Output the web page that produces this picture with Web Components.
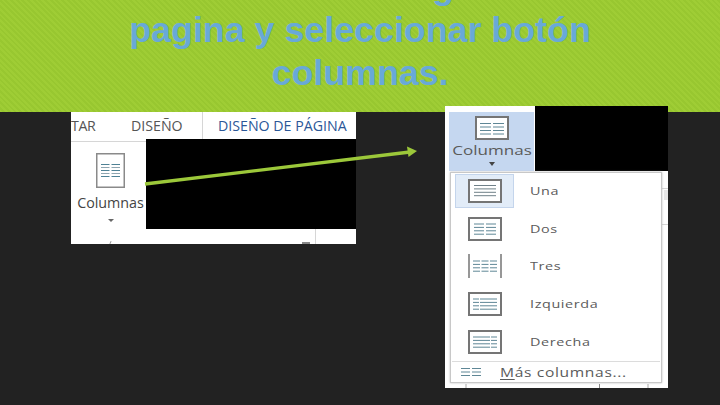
<!DOCTYPE html>
<html><head><meta charset="utf-8">
<style>html,body{margin:0;padding:0;background:#222;width:720px;height:405px;overflow:hidden}</style>
</head><body>
<slide-view></slide-view>
<script>
const icon=(b,lines)=>{let s='';for(const [x1,x2] of lines.cols){for(let i=0;i<4;i++){const y=lines.y+i*3.4;s+=`<line x1="${x1}" x2="${x2}" y1="${y}" y2="${y}" stroke="${lines.c||'#5f8796'}" stroke-width="1"/>`}}
return `<svg width="34" height="24" viewBox="0 0 34 24">${b}${s}</svg>`};
const box=`<rect x="1" y="1" width="32" height="22" fill="#fff" stroke="#757575" stroke-width="2"/>`;
const menuIcons={
 una:icon(box,{cols:[[6,28]],y:6.5,c:'#6f8088'}),
 dos:icon(box,{cols:[[6,16],[18,28]],y:7}),
 tres:icon('<path d="M1 0V24M33 0V24" stroke="#757575" stroke-width="1.5"/>',{cols:[[5,12],[13.5,20.5],[22,29]],y:7}),
 izq:icon(box,{cols:[[5,11],[12,29]],y:7}),
 der:icon(box,{cols:[[5,22],[23,29]],y:7})
};
customElements.define('slide-title',class extends HTMLElement{constructor(){super();this.attachShadow({mode:'open'}).innerHTML=`<style>
:host{display:block;height:112px;overflow:hidden;box-sizing:border-box;text-align:center;
 background:repeating-linear-gradient(45deg,#9fcd35 0 2px,#98c730 2px 4px);
 color:#68a9d8;font:bold 35.8px/43px "Liberation Sans",Arial,sans-serif}
.in{margin-top:-34px}
.g{padding-left:166px}
</style><div class="in"><span class="g">g</span><br>pagina y seleccionar botón<br>columnas.</div>`}});
customElements.define('ribbon-shot',class extends HTMLElement{constructor(){super();this.attachShadow({mode:'open'}).innerHTML=`<style>
:host{display:block;width:285px;height:132px;background:#fff;font-family:"Open Sans","Liberation Sans",sans-serif;color:#444;overflow:hidden;position:relative}
.tabs{display:flex;height:30px;border-bottom:1px solid #d6d6d6;box-sizing:border-box;font-size:14.2px;white-space:nowrap;line-height:27px}
.t1{width:132px;display:flex;height:100%;border-right:1px solid #d6d6d6;box-sizing:border-box;overflow:hidden;color:#555}
.t1 span:first-child{width:60px;letter-spacing:-.4px}
.t2{color:#2b5797;padding-left:15px}
.col{width:79px;display:flex;flex-direction:column;align-items:center;padding-top:11px}
.col svg{margin-left:-1px}
.lab{font-size:14.3px;margin-top:5px;color:#444;white-space:nowrap}
.car{width:0;height:0;border:3px solid transparent;border-top:3px solid #666;border-bottom:0;margin-top:7px}
.mask{position:absolute;left:75px;top:27px;width:210px;height:90px;background:#000}
.foot{position:absolute;left:244px;top:117px;bottom:0;border-left:1px solid #d6d6d6}
.sq{position:absolute;left:231px;top:130px;width:8px;height:2px;background:#888}
.tick{position:absolute;left:39px;top:129px;width:1px;height:3px;background:#999;transform:rotate(25deg)}
</style><div class="tabs"><div class="t1"><span>TAR</span><span>DISEÑO</span></div><div class="t2">DISEÑO DE PÁGINA</div></div>
<div class="col"><svg width="29" height="35" viewBox="0 0 29 35"><rect x=".75" y=".75" width="27.5" height="33.5" fill="#fff" stroke="#8a8a8a" stroke-width="1.5"/><path d="M5 11.5H13.5M15.5 11.5H24M5 17.5H13.5M15.5 17.5H24M5 23.5H13.5M15.5 23.5H24" stroke="#4f8295"/><path d="M5 14.5H13.5M15.5 14.5H24M5 20.5H13.5M15.5 20.5H24" stroke="#8fa5b0"/></svg><div class="lab">Columnas</div><div class="car"></div></div>
<div class="mask"></div><div class="foot"></div><div class="sq"></div><div class="tick"></div>`}});
customElements.define('menu-item',class extends HTMLElement{constructor(){super();const n=this.getAttribute('icon');this.attachShadow({mode:'open'}).innerHTML=`<style>
:host{display:flex;align-items:center;height:37.6px;box-sizing:border-box;font:11.5px "Open Sans","Liberation Sans",sans-serif;color:#5a5a5a;letter-spacing:.5px;padding-left:4px}
:host([sel]) .ic{background:#e2ecf8;box-shadow:inset 0 0 0 1px #c4d5ec}
.ic{width:59px;height:34px;display:flex;align-items:center;justify-content:center;flex:none;margin:-1px 16px 0 0}
.t{display:inline-block;transform:scaleX(1.25);transform-origin:left center;margin-top:-2px}
</style><div class="ic">${menuIcons[n]}</div><span class="t"><slot></slot></span>`}});
customElements.define('columns-menu',class extends HTMLElement{constructor(){super();this.attachShadow({mode:'open'}).innerHTML=`<style>
:host{display:block;width:223px;height:282px;background:#fff;position:relative;overflow:hidden;font:11.5px "Open Sans","Liberation Sans",sans-serif;color:#5a5a5a}
.top{display:flex;height:65px;padding:6px 0 0 4px;box-sizing:border-box}
.btn{width:85px;height:59px;background:#c5d7f0;display:flex;flex-direction:column;align-items:center;flex:none}
.btn svg{margin-top:4px}
.btn .lab{margin:3px 0 0 2px;line-height:15px;font-size:12px;transform:scaleX(1.42);white-space:nowrap}
.car{width:0;height:0;border:3px solid transparent;border-top:4px solid #444;border-bottom:0;margin-top:4px}
.mask{position:absolute;left:90px;top:0;right:0;height:65px;background:#000}
.pop{position:absolute;left:5px;top:66px;width:212px;height:211px;background:#fff;border:1px solid #c8c8c8;box-sizing:border-box;box-shadow:0 0 2px #bbb}
.more{display:flex;align-items:center;height:22px;border-top:1px solid #dcdcdc;letter-spacing:.5px;padding-left:9px;box-sizing:border-box;margin:0 1px}
.more svg{margin-right:19px;flex:none}
.more span{display:inline-block;font-size:12px;transform:scaleX(1.3);transform-origin:left center;white-space:nowrap}
u{text-underline-offset:2px}
.r{position:absolute;background:#d4d4d4}
</style><div class="top"><div class="btn"><svg width="34" height="24" viewBox="0 0 34 24">${box}<path d="M5 7.5H16M18 7.5H29M5 11H16M18 11H29M5 14.5H16M18 14.5H29M5 18H16M18 18H29" stroke="#5f8796"/></svg><div class="lab">Columnas</div><div class="car"></div></div></div><div class="mask"></div>
<div class="r" style="left:217px;top:82px;width:6px;height:1px"></div><div class="r" style="left:217px;top:118px;width:6px;height:1px"></div><div class="r" style="left:219px;top:84px;width:4px;height:10px;background:#e6e6e6"></div>
<div class="r" style="left:20px;top:278px;width:2px;height:4px"></div><div class="r" style="left:154px;top:278px;width:1px;height:4px;background:#888"></div><div class="r" style="left:202px;top:278px;width:2px;height:4px"></div>
<div class="pop"><slot></slot><div class="more"><svg width="20" height="10" viewBox="0 0 20 10"><path d="M0 1.5H9M11 1.5H20M0 5H9M11 5H20M0 8.5H9M11 8.5H20" stroke="#5f8796"/></svg><span><u>M</u>ás columnas...</span></div></div>`}});
customElements.define('slide-view',class extends HTMLElement{constructor(){super();this.attachShadow({mode:'open'}).innerHTML=`<style>
:host{display:block;width:720px;height:405px;position:relative;background:#222;overflow:hidden}
.row{display:flex;align-items:flex-start;padding-left:71px;position:relative}
ribbon-shot{flex:none}
columns-menu{flex:none;margin-left:89px;margin-top:-6px}
svg.arrow{position:absolute;left:0;top:0}
</style><slide-title></slide-title><div class="row"><ribbon-shot></ribbon-shot><columns-menu>
<menu-item icon="una" sel>Una</menu-item><menu-item icon="dos">Dos</menu-item><menu-item icon="tres">Tres</menu-item><menu-item icon="izq">Izquierda</menu-item><menu-item icon="der">Derecha</menu-item>
</columns-menu></div>
<svg class="arrow" width="720" height="405"><path d="M145 184L410 152" stroke="#9cc83a" stroke-width="3.4"/><path d="M417 151L407 146.5L408.5 157Z" fill="#9cc83a"/></svg>`}});
</script></body></html>
